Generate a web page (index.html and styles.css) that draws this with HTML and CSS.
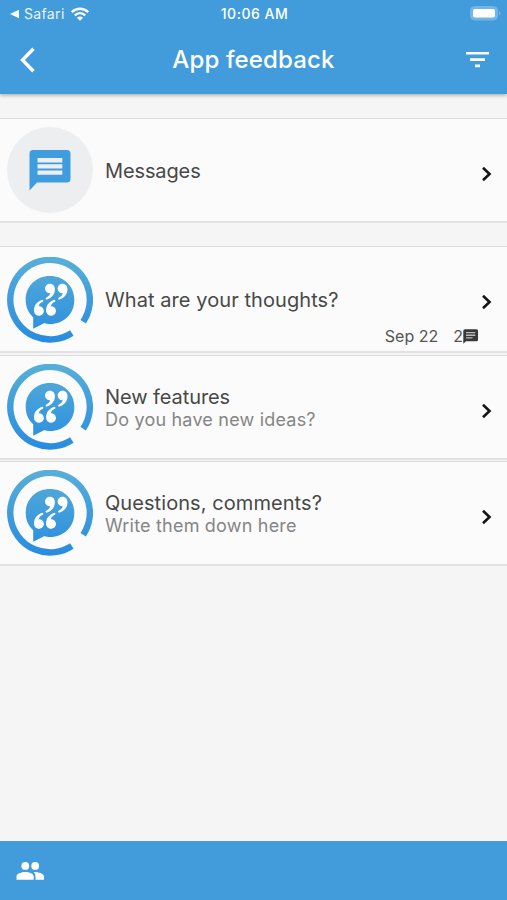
FILE: index.html
```html
<!DOCTYPE html>
<html lang="en">
<head>
<meta charset="utf-8">
<title>App feedback</title>
<link rel="stylesheet" href="styles.css">
</head>
<body>
<svg class="defs" aria-hidden="true">
  <defs>
    <linearGradient id="blue" gradientUnits="userSpaceOnUse" x1="43" y1="0" x2="43" y2="86"><stop offset="0" stop-color="#58afd8"/><stop offset="1" stop-color="#288bdf"/></linearGradient>
    <path id="quote" d="M-4.700 0A4.700 4.700 0 0 1 0-4.700C3.500-4.700 5.200-2.300 5.200.8C5.200 6.300 1.500 9.800-3.400 11.200Q-4.600 10.500-4 9.400C-1.300 8.200.2 6.600.5 4.600A4.700 4.700 0 0 1-4.700 0Z"/>
    <symbol id="logo" viewBox="0 0 86 86">
      <path d="M76.200 65A39.800 39.800 0 1 0 64.800 76.300" transform="translate(0 -.3)" fill="none" stroke="url(#blue)" stroke-width="6.400"/>
      <path d="M43 19C56.800 19 67.300 29 67.300 43S56.800 67 43 67C41 67 39 66.600 37.500 66L26.200 71.700V60.300C21.500 56 18.700 50 18.700 43C18.700 29 29.200 19 43 19Z" fill="url(#blue)"/>
      <g fill="#fff"><use href="#quote" transform="translate(42.700 31.500)"/><use href="#quote" transform="translate(55.300 31.500)"/><use href="#quote" transform="translate(32.200 54) rotate(180)"/><use href="#quote" transform="translate(44.300 54) rotate(180)"/></g>
    </symbol>
    <symbol id="next" viewBox="0 0 12 16"><path d="M2 1.800L8.500 8L2 14.200" fill="none" stroke="#151515" stroke-width="2.600"/></symbol>
  </defs>
</svg>
<div class="app">
  <header class="top">
    <div class="status">
      <div class="carrier">
        <svg width="9" height="10" viewBox="0 0 9 10"><path d="M0 5L9 .7V9.300Z" fill="#fff"/></svg>
        <span class="safari">Safari</span>
        <svg width="18" height="14" viewBox="0 0 18 14"><g fill="none" stroke="#fff" stroke-width="2.300"><path d="M.8 5.200C5.500.600 12.500.600 17.200 5.200"/><path d="M3.800 8.300C6.800 5.400 11.200 5.400 14.200 8.300"/></g><path d="M9 13.800L5.900 10.700C7.600 9 10.400 9 12.100 10.700Z" fill="#fff"/></svg>
      </div>
      <span class="time">10:06 AM</span>
      <svg class="battery" width="31" height="15" viewBox="0 0 31 15"><rect x=".5" y=".5" width="27" height="13.500" rx="4" fill="#72b5e6" stroke="#72b5e6"/><rect x="3" y="3" width="22" height="8.500" rx="1.800" fill="#fff"/><path d="M29 5.200C31 5.700 31 8.800 29 9.300Z" fill="#72b5e6"/></svg>
    </div>
    <div class="bar">
      <svg width="16" height="26" viewBox="0 0 16 26"><path d="M13.500 1.800L2.500 13L13.500 24.200" fill="none" stroke="#fff" stroke-width="3.400"/></svg>
      <h1 class="title">App feedback</h1>
      <svg width="23" height="16" viewBox="0 0 23 16"><path d="M0 0H23V2.600H0ZM4 6.300H19V8.900H4ZM9 12.500H14V15.200H9Z" fill="#fff"/></svg>
    </div>
  </header>
  <main class="content">
    <section class="card messages">
      <div class="avatar"><svg width="42" height="41" viewBox="0 0 42 41"><path d="M4 0H38Q41.500 0 41.500 3.500V29Q41.500 32.500 38 32.500H8L.5 40.500V3.500Q.5 0 4 0Z" fill="#3f9cdd"/><path d="M8.500 8H33.300V12.400H8.500ZM8.500 14.300H33.300V18.600H8.500ZM8.500 20.500H33.300V24.700H8.500Z" fill="#eceef0"/></svg></div>
      <h2 class="name">Messages</h2>
      <svg class="next"><use href="#next"/></svg>
    </section>
    <section class="card thoughts">
      <svg class="logo"><use href="#logo"/></svg>
      <h2 class="name">What are your thoughts?</h2>
      <svg class="next"><use href="#next"/></svg>
      <div class="meta"><span class="date">Sep 22</span><span>2</span><svg width="15" height="15" viewBox="0 0 15 15"><path d="M2 .3H13.500Q15 .3 15 1.800V10.800Q15 12.300 13.500 12.300H3L.3 14.700V1.800Q.3.300 2 .3Z" fill="#383838"/><path d="M3 3H12.300V4.300H3ZM3 5.600H12.300V6.900H3ZM3 8.200H9.500V9.500H3Z" fill="#bbb"/></svg></div>
    </section>
    <section class="card features">
      <svg class="logo"><use href="#logo"/></svg>
      <div class="text"><h2 class="name">New features</h2><p class="sub">Do you have new ideas?</p></div>
      <svg class="next"><use href="#next"/></svg>
    </section>
    <section class="card questions">
      <svg class="logo"><use href="#logo"/></svg>
      <div class="text"><h2 class="name">Questions, comments?</h2><p class="sub">Write them down here</p></div>
      <svg class="next"><use href="#next"/></svg>
    </section>
  </main>
  <footer class="bottom">
    <svg width="28" height="18" viewBox="0 0 28 18"><g fill="#fff"><circle cx="9.300" cy="3.900" r="3.900"/><circle cx="19.200" cy="3.900" r="3.900"/><path d="M.5 17.800V14.500C.5 11.500 5.600 10 9.300 10S17.700 11.500 17.700 14.500V17.800Z"/><path d="M17.800 10.100C21.800 10 28 11.500 28 14.500V17.800H19.500V14.500Q19.500 11.800 17.800 10.100Z"/></g></svg>
  </footer>
</div>
</body>
</html>
```

FILE: styles.css
```css
* { box-sizing: border-box; }
body { margin: 0; font-family: Inter, "Liberation Sans", sans-serif; color: #484848; }
h1, h2, p { margin: 0; }
svg { display: block; flex: none; }
.defs { position: absolute; width: 0; height: 0; }
.app { height: 900px; display: flex; flex-direction: column; background: #f5f5f5; overflow: hidden; }
.top { height: 94px; flex: none; background: #429cdc; color: #fff; box-shadow: 0 1px 4px rgba(0, 0, 0, .35); }
.status { height: 27px; display: grid; grid-template-columns: 1fr auto 1fr; align-items: center; padding: 0 6px 0 10px; }
.carrier { display: flex; align-items: center; }
.safari { margin: 0 6px 0 5px; font-size: 14px; letter-spacing: .35px; opacity: .9; }
.time { margin-left: -2px; font-size: 14px; font-weight: 550; letter-spacing: .5px; }
.battery { justify-self: end; }
.bar { height: 66px; display: flex; align-items: center; justify-content: space-between; padding: 0 18px 0 20px; }
.title { margin-left: 5px; font-size: 24px; font-weight: 500; letter-spacing: .15px; line-height: 32px; }
.content { flex: 1; padding-top: 24px; }
.card { height: 105px; display: flex; align-items: center; padding: 0 14px 0 7px; background: #fbfbfb; border-top: 1px solid #dcdcdc; border-bottom: 2px solid #e2e2e2; }
.messages { margin-bottom: 23px; }
.messages .name { letter-spacing: -.12px; }
.thoughts { height: 107px; display: grid; grid-template-columns: 86px 1fr 12px; position: relative; padding-top: 2px; margin-bottom: 2px; }
.thoughts .next { margin-top: 4px; }
.features { margin-bottom: 1px; }
.features .name { letter-spacing: -.08px; }
.avatar { width: 86px; height: 86px; flex: none; border-radius: 50%; background: #eceef0; display: flex; align-items: center; justify-content: center; }
.logo { width: 86px; height: 86px; }
.name { margin-left: 12px; padding-top: 2px; font-size: 20px; font-weight: 400; line-height: 23px; letter-spacing: .07px; }
.thoughts .name { padding-top: 1px; }
.sub { margin-left: 12px; font-size: 18px; line-height: 22px; letter-spacing: .2px; color: #858585; }
.next { width: 12px; height: 16px; margin-left: auto; margin-top: 8px; }
.meta { position: absolute; right: 29px; bottom: 5px; display: flex; align-items: center; font-size: 16px; line-height: 20px; letter-spacing: 0; color: #555; }
.date { margin-right: 15px; }
.bottom { height: 59px; flex: none; display: flex; align-items: center; padding-left: 16px; background: #429cdc; }
```
